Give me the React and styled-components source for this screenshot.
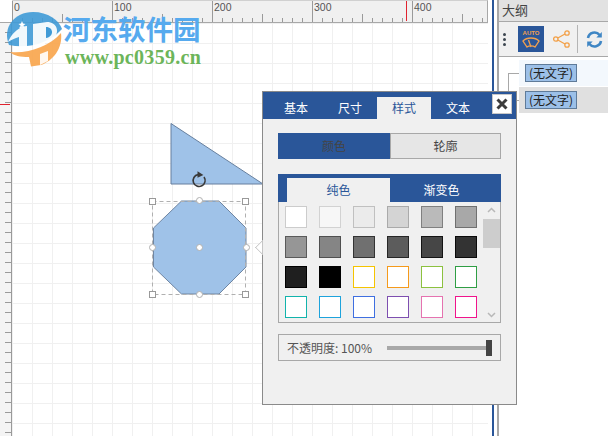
import React from 'react';
import styled, { createGlobalStyle } from 'styled-components';

const GlobalStyle = createGlobalStyle`
  html, body {
    margin: 0;
    padding: 0;
    background: #fff;
  }
  * {
    box-sizing: border-box;
  }
`

const CJK = `"Noto Sans CJK SC", "Liberation Sans", sans-serif`
const BLUE = '#2a5699'

const Page = styled.div`
  position: relative;
  display: flex;
  width: 608px;
  height: 436px;
  overflow: hidden;
  font-family: ${CJK};
  background: #fff;
`

const Workspace = styled.div`
  flex: none;
  width: 494px;
  padding-right: 4px;
  border-right: 2px solid ${BLUE};
  display: flex;
  flex-direction: column;
`

const TopRow = styled.div`
  display: flex;
  height: 23px;
  flex: none;
  border-bottom: 1px solid #a8a8a8;
`

const Corner = styled.div`
  width: 12px;
  flex: none;
`

const TopRuler = styled.div`
  display: flex;
  flex: 1;
  overflow: hidden;
  position: relative;
  background: #f0f0f0;
  border-top: 1px solid #d0d0d0;
  border-right: 1px solid #a8a8a8;
`

const RulerSegment = styled.div`
  flex: none;
  width: 100px;
  height: 100%;
  padding-left: 1px;
  border-left: 1px solid #9a9a9a;
  font: 10.5px/13px "Liberation Sans", sans-serif;
  color: #555;
  background:
    linear-gradient(#9a9a9a, #9a9a9a) 49px 13px / 1px 8px no-repeat,
    repeating-linear-gradient(to right, transparent 0 9px, #9a9a9a 9px 10px) 0 17px / 100% 4px no-repeat;
`

const RedMarker = styled.div`
  position: absolute;
  left: 394px;
  top: 0;
  width: 1px;
  height: 20px;
  background: #e0222e;
`

const BottomRow = styled.div`
  display: flex;
  flex: 1;
  min-height: 0;
`

const LeftRuler = styled.div`
  position: relative;
  flex: none;
  width: 12px;
  background:
    repeating-linear-gradient(to bottom, transparent 0 9px, #9a9a9a 9px 10px) 5px 0 / 6px 100% no-repeat,
    #f4f4f4;
  border-right: 1px solid #9a9a9a;
`

const LeftMarker = styled.div`
  position: absolute;
  left: 0;
  top: 81px;
  width: 10px;
  height: 1px;
  background: #e0222e;
`

const Canvas = styled.div`
  position: relative;
  flex: 1;
  background-color: #fff;
  background-image:
    linear-gradient(to right, #f0f0f0 1px, transparent 1px),
    linear-gradient(to bottom, #f0f0f0 1px, transparent 1px);
  background-size: 20px 20px;
  background-position: 0 0;
`

const Diagram = styled.svg`
  position: absolute;
  left: 0;
  top: 0;
  overflow: visible;
`

const Sidebar = styled.div`
  flex: 1;
  border-left: 2px solid #a8a8a8;
  margin-left: 3px;
  display: flex;
  flex-direction: column;
`

const SideTitle = styled.div`
  height: 22px;
  padding-left: 3px;
  background: #e2e2e2;
  border-bottom: 1px solid #a8a8a8;
  font-size: 13px;
  line-height: 20px;
  color: #444;
`

const SideTools = styled.div`
  height: 35px;
  display: flex;
  align-items: center;
  background: #f0f0f0;
  border-bottom: 1px solid #a8a8a8;
  padding-left: 4px;
`

const Dots = styled.div`
  display: flex;
  flex-direction: column;
  gap: 2px;
  width: 3px;
  margin-right: 12px;

  span {
    width: 3px;
    height: 3px;
    background: #3d4650;
    border-radius: 50%;
  }
`

const AutoButton = styled.div`
  width: 26px;
  height: 26px;
  background: ${BLUE};
  display: flex;
  flex-direction: column;
  align-items: center;
  padding-top: 4px;
  color: #f0a050;
  font: bold 6px/6px "Liberation Sans", sans-serif;
`

const ShareGlyph = styled.svg`
  flex: none;
  margin-left: 9px;
`

const ToolDivider = styled.div`
  width: 1px;
  height: 28px;
  background: #b4b4b4;
  margin: 0 8px 0 7px;
`

const Outline = styled.div`
  position: relative;
  flex: 1;
  padding: 3px 0 0 20px;
`

const Connector = styled.div`
  position: absolute;
  left: 9px;
  top: 16px;
  width: 11px;
  height: 28px;
  border-left: 1px solid #a8a8a8;
  border-top: 1px solid #a8a8a8;
  border-bottom: 1px solid #a8a8a8;
`

const OutlineRow = styled.div`
  height: ${p => p.$h}px;
  padding: 4px 0 0 6px;
  background: ${p => p.$bg};
  margin-bottom: 1px;
`

const TopicTag = styled.span`
  display: block;
  width: 52px;
  height: 18px;
  background: #9cc0e8;
  border: 1px solid #5f7b99;
  font-size: 12px;
  line-height: 15px;
  color: #222;
  text-align: center;
  white-space: nowrap;
`

const Popup = styled.div`
  position: absolute;
  left: 262px;
  top: 91px;
  width: 255px;
  height: 314px;
  background: #f0f0f0;
  border: 1px solid #8a8a8a;

  &::before {
    content: '';
    position: absolute;
    left: -6px;
    top: 150px;
    width: 10px;
    height: 10px;
    background: #fff;
    border-left: 1px solid #c8c8c8;
    border-bottom: 1px solid #c8c8c8;
    transform: rotate(45deg);
    clip-path: polygon(0 0, 100% 100%, 0 100%);
  }
`

const PopupHeader = styled.div`
  display: flex;
  align-items: flex-end;
  height: 27px;
  padding-left: 6px;
  background: ${BLUE};
  position: relative;
`

const MainTab = styled.div`
  width: 54px;
  height: 22px;
  text-align: center;
  font-size: 12px;
  line-height: 22px;
  color: ${p => (p.$active ? BLUE : '#fff')};
  background: ${p => (p.$active ? '#f0f0f0' : 'transparent')};
`

const CloseButton = styled.div`
  align-self: flex-start;
  width: 20px;
  height: 20px;
  margin: 2px 0 0 7px;
  background: #fff;
  border: 1px solid #c8c8c8;
  display: flex;
  align-items: center;
  justify-content: center;
`

const PopupBody = styled.div`
  padding: 14px 15px 0;
`

const Segmented = styled.div`
  display: flex;
  height: 26px;
`

const SegmentButton = styled.div`
  flex: ${p => (p.$active ? '0 0 112px' : '1')};
  text-align: center;
  font-size: 12px;
  line-height: 24px;
  color: #444;
  background: ${p => (p.$active ? BLUE : '#e6e6e6')};
  border: 1px solid ${p => (p.$active ? BLUE : '#a8a8a8')};
`

const FillTabs = styled.div`
  display: flex;
  align-items: flex-end;
  height: 28px;
  margin-top: 15px;
  padding: 0 8px 0 9px;
  background: ${BLUE};
`

const FillTab = styled.div`
  flex: ${p => (p.$active ? '0 0 103px' : '1')};
  height: 24px;
  text-align: center;
  font-size: 12px;
  line-height: 24px;
  color: ${p => (p.$active ? BLUE : '#fff')};
  background: ${p => (p.$active ? '#f0f0f0' : 'transparent')};
`

const PaletteBox = styled.div`
  display: flex;
  height: 121px;
  border: 1px solid #a8a8a8;
  border-top: 0;
`

const SwatchGrid = styled.div`
  display: grid;
  grid-template-columns: repeat(6, 22px);
  grid-auto-rows: 22px;
  column-gap: 12px;
  row-gap: 8px;
  padding: 4px 0 0 6px;
`

const Swatch = styled.div`
  background: ${p => p.$fill};
  border: 1px solid ${p => p.$line};
`

const ScrollTrack = styled.div`
  position: relative;
  flex: none;
  width: 17px;
  margin-left: auto;
  display: flex;
  flex-direction: column;
  align-items: center;
  justify-content: space-between;
  padding: 5px 0 4px;
  color: #b8b8b8;
`

const ScrollThumb = styled.div`
  position: absolute;
  left: 0;
  top: 17px;
  width: 17px;
  height: 29px;
  background: #cdcdcd;
`

const OpacityBox = styled.div`
  display: flex;
  align-items: center;
  height: 27px;
  margin-top: 11px;
  padding-left: 8px;
  border: 1px solid #a8a8a8;
`

const OpacityLabel = styled.div`
  flex: none;
  width: 100px;
  font-size: 12px;
  color: #555;
  white-space: nowrap;
`

const SliderTrack = styled.div`
  position: relative;
  width: 100px;
  height: 4px;
  background: #a8a8a8;
`

const SliderThumb = styled.div`
  position: absolute;
  right: -5px;
  top: -6px;
  width: 6px;
  height: 16px;
  background: #444;
`

const Watermark = styled.div`
  position: absolute;
  left: 0;
  top: 0;
  display: flex;
  pointer-events: none;
`

const LogoMark = styled.svg`
  flex: none;
`

const WatermarkText = styled.div`
  margin-top: 12px;
`

const SiteName = styled.div`
  margin: 0 0 2px -2px;
  font-size: 27.5px;
  line-height: 33px;
  font-weight: 700;
  color: #56aaee;
  white-space: nowrap;
`

const SiteUrl = styled.div`
  font: bold 20px/20px "Liberation Serif", serif;
  letter-spacing: 0.3px;
  color: #6cb55a;
  white-space: nowrap;
`

const rulerLabels = [0, 100, 200, 300, 400]
const mainTabs = ['基本', '尺寸', '样式', '文本']

const swatches = [
  ['#ffffff', '#cccccc'], ['#f7f7f7', '#d2d2d2'], ['#ebebeb', '#c0c0c0'], ['#d4d4d4', '#aaaaaa'], ['#bababa', '#808080'], ['#a8a8a8', '#707070'],
  ['#969696', '#5a5a5a'], ['#858585', '#4f4f4f'], ['#707070', '#333333'], ['#5c5c5c', '#262626'], ['#464646', '#141414'], ['#333333', '#0a0a0a'],
  ['#1f1f1f', '#000000'], ['#000000', '#000000'], ['#ffffff', '#f5c400'], ['#ffffff', '#f59a1b'], ['#ffffff', '#8cc13f'], ['#ffffff', '#2f9e44'],
  ['#ffffff', '#12b3ac'], ['#ffffff', '#1ea3dc'], ['#ffffff', '#3f6fe0'], ['#ffffff', '#7e4fb0'], ['#ffffff', '#e573b0'], ['#ffffff', '#f0148c'],
]

// canvas origin is at (12, 23), the shapes below use page coordinates
function Shapes() {
  const squares = [[152.5, 201.5], [245.5, 201.5], [152.5, 294.5], [245.5, 294.5]]
  const circles = [[199.5, 200.5], [152.5, 247.5], [199.5, 247.5], [246.5, 247.5], [199.5, 294.5]]
  return (
    <Diagram width="300" height="300" viewBox="12 23 300 300">
      <path d="M171 123.5 L263 184 L171 184 Z" fill="#9fc2e8" stroke="#667f9e" strokeWidth="1" />
      <path d="M181.5 201 L219 201 L246 228 L246 267 L219 294 L181.5 294 L153.5 267 L153.5 228 Z" fill="#9fc2e8" stroke="#6f86a3" strokeWidth="1" />
      <rect x="152.5" y="201.5" width="93" height="93" fill="none" stroke="#b0b0b0" strokeDasharray="4 3" />
      {squares.map(([x, y]) => (
        <rect key={`${x}-${y}`} x={x - 3} y={y - 3} width="6" height="6" fill="#fff" stroke="#999" />
      ))}
      {circles.map(([x, y]) => (
        <circle key={`${x}-${y}`} cx={x} cy={y} r="3" fill="#fff" stroke="#b0b0b0" />
      ))}
      <path d="M198 174.6 A6 6 0 1 0 204 177" fill="none" stroke="#3a3a3a" strokeWidth="1.6" />
      <path d="M197.5 171.3 L203.4 175 L197.5 177.8 Z" fill="#3a3a3a" />
    </Diagram>
  )
}

function AutoIcon() {
  return (
    <AutoButton>
      AUTO
      <svg width="18" height="14" viewBox="0 0 18 14" fill="none" stroke="#f0a050" strokeWidth="1.3">
        <path d="M1 5 C5 1 13 1 17 5 L13 11 C11 9.5 7 9.5 5 11 Z" />
        <path d="M9 11 L6.5 4" />
      </svg>
    </AutoButton>
  )
}

function ShareIcon() {
  return (
    <ShareGlyph width="17" height="18" viewBox="0 0 17 18" fill="none" stroke="#f2a048" strokeWidth="1.3">
      <circle cx="2.8" cy="9" r="2.2" />
      <circle cx="14" cy="3" r="2.2" />
      <circle cx="14" cy="15" r="2.2" />
      <path d="M4.8 8 L12 4 M4.8 10 L12 14" />
    </ShareGlyph>
  )
}

function RefreshIcon() {
  return (
    <svg width="17" height="17" viewBox="0 0 17 17" fill="none" stroke="#3f86c4" strokeWidth="2.6">
      <path d="M2 7 A6.6 6.6 0 0 1 13.6 4" />
      <path d="M15 10 A6.6 6.6 0 0 1 3.4 13" />
      <path d="M15.8 1 L15.8 6.5 L10.3 6.5 Z" fill="#3f86c4" stroke="none" />
      <path d="M1.2 16 L1.2 10.5 L6.7 10.5 Z" fill="#3f86c4" stroke="none" />
    </svg>
  )
}

// drawn in page coordinates, it sits at the top left corner
function Logo() {
  return (
    <LogoMark width="65" height="70" viewBox="0 0 65 70">
      <path d="M9 45 C2 28 14 12 33 12 C48 12 59 20 62 29 C49 44 27 49 9 45 Z" fill="#3f9ad6" opacity="0.9" />
      <path d="M10 52 C28 54 50 46 61 33 C63 48 53 61 41 65 L31 66.5 L29 57 C20 57 14 56 10 52 Z" fill="#f9a64e" opacity="0.92" />
      <path d="M40 65 L40 54 L48 51 L48 61 Z" fill="#fff" opacity="0.9" />
      <path d="M8 42 C11 35 15 31 20 28 L19 27 L27 26 L27 47 L19 47 L19 37 C15 38 11 40 8 42 Z" fill="#fff" opacity="0.92" />
      <path d="M33 24 L47 22 C57 22 60 32 54 38 C52 41 48 42 45 42 L45 45 L33 47 Z" fill="#fff" opacity="0.92" />
      <path d="M46 27 C54 27 54 37 46 38 Z" fill="#3f9ad6" />
      <path d="M22 21 L23 23.5 L25.5 24 L23.5 25.5 L24 28 L22 26.5 L20 28 L20.5 25.5 L18.5 24 L21 23.5 Z" fill="#fff" />
    </LogoMark>
  )
}

function App() {
  return (
    <Page>
      <GlobalStyle />
      <Workspace>
        <TopRow>
          <Corner />
          <TopRuler>
            {rulerLabels.map(n => <RulerSegment key={n}>{n}</RulerSegment>)}
            <RedMarker />
          </TopRuler>
        </TopRow>
        <BottomRow>
          <LeftRuler>
            <LeftMarker />
          </LeftRuler>
          <Canvas>
            <Shapes />
          </Canvas>
        </BottomRow>
      </Workspace>

      <Sidebar>
        <SideTitle>大纲</SideTitle>
        <SideTools>
          <Dots><span /><span /><span /></Dots>
          <AutoIcon />
          <ShareIcon />
          <ToolDivider />
          <RefreshIcon />
        </SideTools>
        <Outline>
          <Connector />
          <OutlineRow $h={26} $bg="#f3f8fd"><TopicTag>(无文字)</TopicTag></OutlineRow>
          <OutlineRow $h={26} $bg="#e0e0e0"><TopicTag>(无文字)</TopicTag></OutlineRow>
        </Outline>
      </Sidebar>

      <Popup>
        <PopupHeader>
          {mainTabs.map(t => <MainTab key={t} $active={t === '样式'}>{t}</MainTab>)}
          <CloseButton>
            <svg width="12" height="12" viewBox="0 0 12 12" stroke="#3c3c3c" strokeWidth="3">
              <path d="M1.5 1.5 L10.5 10.5 M10.5 1.5 L1.5 10.5" />
            </svg>
          </CloseButton>
        </PopupHeader>
        <PopupBody>
          <Segmented>
            <SegmentButton $active>颜色</SegmentButton>
            <SegmentButton>轮廓</SegmentButton>
          </Segmented>
          <FillTabs>
            <FillTab $active>纯色</FillTab>
            <FillTab>渐变色</FillTab>
          </FillTabs>
          <PaletteBox>
            <SwatchGrid>
              {swatches.map(([fill, line], i) => <Swatch key={i} $fill={fill} $line={line} />)}
            </SwatchGrid>
            <ScrollTrack>
              <svg width="9" height="6" viewBox="0 0 9 6" fill="none" stroke="currentColor" strokeWidth="1.5"><path d="M1 5 L4.5 1.5 L8 5" /></svg>
              <ScrollThumb />
              <svg width="9" height="6" viewBox="0 0 9 6" fill="none" stroke="currentColor" strokeWidth="1.5"><path d="M1 1 L4.5 4.5 L8 1" /></svg>
            </ScrollTrack>
          </PaletteBox>
          <OpacityBox>
            <OpacityLabel>不透明度: 100%</OpacityLabel>
            <SliderTrack>
              <SliderThumb />
            </SliderTrack>
          </OpacityBox>
        </PopupBody>
      </Popup>

      <Watermark>
        <Logo />
        <WatermarkText>
          <SiteName>河东软件园</SiteName>
          <SiteUrl>www.pc0359.cn</SiteUrl>
        </WatermarkText>
      </Watermark>
    </Page>
  )
}

export default App;
